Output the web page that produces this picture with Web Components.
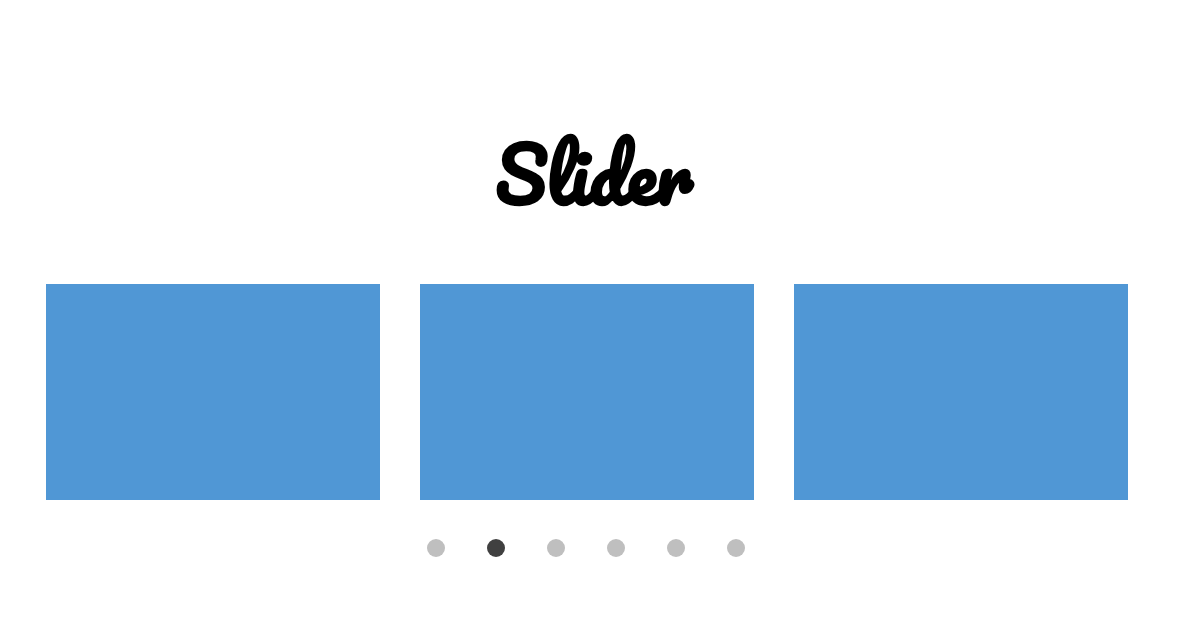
<!DOCTYPE html>
<html lang="en">
<head>
<meta charset="utf-8">
<meta name="viewport" content="width=device-width, initial-scale=1">
<title>Slider</title>
<style>
  body { margin: 0; background: #fff; color: #000; font-family: Pacifico, Lato, sans-serif; }
</style>
</head>
<body>
<slider-section>
  <span slot="title">Slider</span>
  <slide-card></slide-card>
  <slide-card></slide-card>
  <slide-card></slide-card>
  <slider-dots slot="dots" count="6" active="1"></slider-dots>
</slider-section>

<template id="section-template">
  <style>
    :host { display: block; padding: 126px 56px 64px 46px; }
    h1 { margin: 0 0 62px; padding-left: 14px; font-size: 74px; line-height: 96px; font-weight: 700; text-align: center; }
    .track { display: grid; grid-template-columns: repeat(3, 1fr); gap: 40px; }
    nav { display: flex; justify-content: center; padding: 39px 2px 0 0; }
  </style>
  <h1><slot name="title"></slot></h1>
  <div class="track"><slot></slot></div>
  <nav aria-label="Slides"><slot name="dots"></slot></nav>
</template>

<template id="card-template">
  <style>
    :host { display: block; height: 216px; background: #5097d5; }
  </style>
  <slot></slot>
</template>

<template id="dots-template">
  <style>
    :host { display: flex; gap: 42px; }
    button { width: 18px; height: 18px; padding: 0; border: 0; border-radius: 50%; background: #bfbfbf; cursor: pointer; }
    button[aria-current="true"] { background: #404040; }
  </style>
</template>

<script>
  const attach = (host, id) => {
    const root = host.attachShadow({ mode: "open" });
    root.append(document.getElementById(id).content.cloneNode(true));
    return root;
  };

  customElements.define("slider-section", class extends HTMLElement {
    constructor() { super(); attach(this, "section-template"); }
  });

  customElements.define("slide-card", class extends HTMLElement {
    constructor() { super(); attach(this, "card-template"); }
  });

  customElements.define("slider-dots", class extends HTMLElement {
    constructor() {
      super();
      const root = attach(this, "dots-template");
      const count = Number(this.getAttribute("count"));
      const buttons = Array.from({ length: count }, (_, i) => {
        const button = document.createElement("button");
        button.type = "button";
        button.setAttribute("aria-label", `Go to slide ${i + 1}`);
        button.addEventListener("click", () => select(i));
        root.append(button);
        return button;
      });
      const select = index => buttons.forEach((b, i) => b.setAttribute("aria-current", String(i === index)));
      select(Number(this.getAttribute("active")));
    }
  });
</script>
</body>
</html>
